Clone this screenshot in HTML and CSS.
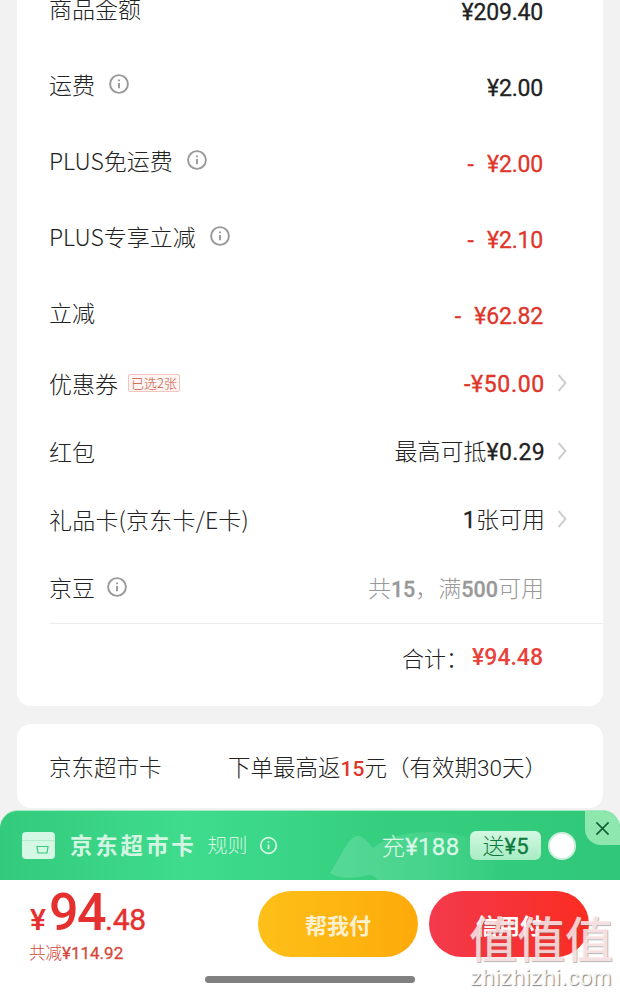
FILE: index.html
```html
<!DOCTYPE html>
<html lang="zh">
<head>
<meta charset="utf-8">
<title>订单结算</title>
<link rel="stylesheet" href="styles.css">
</head>
<body>
<main class="page">
  <section class="card summary">
    <div class="row tall"><span class="label">商品金额</span><span class="value">¥209.40</span></div>
    <div class="row tall"><span class="label">运费<svg class="info" viewBox="0 0 20 20"><circle cx="10" cy="10" r="8.9"/><path d="M10 9v5.2"/><path d="M10 5.6v1.6"/></svg></span><span class="value">¥2.00</span></div>
    <div class="row tall"><span class="label">PLUS免运费<svg class="info" viewBox="0 0 20 20"><circle cx="10" cy="10" r="8.9"/><path d="M10 9v5.2"/><path d="M10 5.6v1.6"/></svg></span><span class="value red">- ¥2.00</span></div>
    <div class="row tall"><span class="label">PLUS专享立减<svg class="info" viewBox="0 0 20 20"><circle cx="10" cy="10" r="8.9"/><path d="M10 9v5.2"/><path d="M10 5.6v1.6"/></svg></span><span class="value red">- ¥2.10</span></div>
    <div class="row tall"><span class="label">立减</span><span class="value red">- ¥62.82</span></div>
    <div class="row"><span class="label">优惠券<em class="tag">已选2张</em></span><span class="link"><span class="plain red"><span class="num">-¥50.00</span></span><svg class="chev" viewBox="0 0 10 20"><path d="M1.5 2l7 8-7 8"/></svg></span></div>
    <div class="row"><span class="label">红包</span><span class="link"><span class="plain">最高可抵<span class="num">¥0.29</span></span><svg class="chev" viewBox="0 0 10 20"><path d="M1.5 2l7 8-7 8"/></svg></span></div>
    <div class="row"><span class="label label-wide">礼品卡(京东卡/E卡)</span><span class="link"><span class="plain"><span class="num">1</span>张可用</span><svg class="chev" viewBox="0 0 10 20"><path d="M1.5 2l7 8-7 8"/></svg></span></div>
    <div class="row"><span class="label">京豆<svg class="info near" viewBox="0 0 20 20"><circle cx="10" cy="10" r="8.9"/><path d="M10 9v5.2"/><path d="M10 5.6v1.6"/></svg></span><span class="plain grey">共<span class="num">15</span>，满<span class="num">500</span>可用</span></div>
    <div class="total"><span class="total-label">合计：</span><span class="total-value">¥94.48</span></div>
  </section>
  <section class="card market">
    <span class="label market-name">京东超市卡</span>
    <span class="market-note">下单最高返<b>15</b>元（有效期<i>30</i>天）</span>
  </section>
</main>

<footer class="dock">
  <div class="banner">
    <svg class="fish" viewBox="0 0 180 60">
      <defs><linearGradient id="fishfade" x1="0" x2="1" y1="0" y2="0"><stop offset="0" stop-color="#57d997"/><stop offset=".6" stop-color="#46d38b"/><stop offset="1" stop-color="#36cd7f"/></linearGradient></defs>
      <path fill="url(#fishfade)" d="M0 52C10 38 18 15 28 15c6 0 10 7 15 12C60 14 80 11 100 11c25 0 48 6 60 18 8 10 6 24 0 31H48c-2-4-5-6-10-6-14 4-28 4-38-2z"/>
    </svg>
    <svg class="card-icon" viewBox="0 0 33 27"><rect width="33" height="27" rx="4" fill="#d4f8e3"/><path d="M0 8.5h33" stroke="#b1edcb" stroke-width="1"/><path d="M15 14.500h11l-1 6.500h-9z" fill="none" stroke="#35c97f" stroke-width="1.200"/></svg>
    <span class="banner-title">京东超市卡</span>
    <span class="banner-rule">规则</span>
    <svg class="rule-info" viewBox="0 0 20 20"><circle cx="10" cy="10" r="8.2"/><path d="M10 9v5"/><path d="M10 5.6v1.4"/></svg>
    <span class="banner-spacer"></span>
    <span class="banner-charge">充<span class="num">¥188</span></span>
    <span class="banner-gift">送<span class="num">¥5</span></span>
    <span class="banner-radio"></span>
    <span class="banner-close"><svg viewBox="0 0 16 16"><path d="M1.500 1.500l13 13M14.500 1.500l-13 13"/></svg></span>
  </div>
  <div class="paybar">
    <div class="price">
      <div class="price-main"><span class="yen">¥</span><span class="int">94</span><span class="dec">.48</span></div>
      <div class="saved">共减<span class="num">¥114.92</span></div>
    </div>
    <div class="buttons">
      <span class="btn yellow">帮我付</span>
      <span class="btn redbtn">信用付</span>
    </div>
  </div>
  <div class="home-bar"></div>
</footer>

<div class="watermark">
  <div class="wm-mark">值值值</div>
  <div class="wm-url">zhizhizhi.com</div>
</div>
</body>
</html>
```
FILE: styles.css
```css
* { box-sizing: border-box; }
html, body { margin: 0; height: 100%; }
body {
  width: 620px;
  height: 995px;
  overflow: hidden;
  position: relative;
  background: #f2f2f2;
  font-family: "Noto Sans CJK SC", "Noto Sans", sans-serif;
  color: #222;
}
.page { padding: 0 17px; }
.card { background: #fff; border-radius: 14px; }
.summary { margin-top: -30px; height: 736px; padding: 0 0 0 32px; }
.row {
  height: 68px;
  display: flex;
  align-items: center;
  justify-content: space-between;
  padding: 0 59px 2px 0;
}
.row.tall { height: 76px; padding-bottom: 0; padding-right: 60px; }
.label {
  display: flex;
  align-items: center;
  font-size: 23px;
  font-weight: 300;
  line-height: 30px;
  color: #222;
}
.label-wide { letter-spacing: .2px; }
.info {
  width: 20px;
  height: 20px;
  margin-left: 14px;
  fill: none;
  stroke: #999;
  stroke-width: 1.9;
}
.info.near { margin-left: 12px; }
.value {
  padding-top: 10px;
  font-family: "Roboto", sans-serif;
  font-size: 23px;
  font-weight: 400;
  letter-spacing: -.2px;
  word-spacing: 8px;
  -webkit-text-stroke: .3px currentColor;
  color: #222;
  line-height: 30px;
}
.value.red { color: #e0352a; }
.plain {
  padding-top: 1px;
  font-size: 23px;
  font-weight: 300;
  line-height: 30px;
}
.num {
  font-family: "Roboto", sans-serif;
  font-weight: 400;
  letter-spacing: .3px;
  -webkit-text-stroke: .3px currentColor;
}
.red { color: #e0352a; }
.plain.red .num { -webkit-text-stroke: .4px currentColor; letter-spacing: .7px; }
.grey { color: #999; padding-top: 2px; }
.grey .num { font-size: 21.5px; font-weight: 500; letter-spacing: 0; }
.link {
  display: flex;
  align-items: center;
  margin-right: -24px;
}
.chev {
  width: 10px;
  height: 20px;
  margin: 0 1px 0 12px;
  fill: none;
  stroke: #cdcdcd;
  stroke-width: 1.9;
}
.tag {
  margin-left: 10px;
  height: 18px;
  padding: 0 2px;
  border: 1px solid #f3c4bd;
  border-radius: 2px;
  background: #fff5f3;
  color: #c9543f;
  font-style: normal;
  font-size: 13px;
  line-height: 16px;
}
.total {
  margin-top: 1px;
  border-top: 1px solid #ececec;
  height: 67px;
  display: flex;
  align-items: center;
  justify-content: flex-end;
  padding-right: 60px;
}
.total-label { font-size: 22px; font-weight: 300; width: 70px; }
.total-value {
  font-family: "Roboto", sans-serif;
  font-size: 23px;
  font-weight: 500;
  color: #e8423a;
}
.market {
  margin-top: 18px;
  height: 84px;
  display: flex;
  align-items: center;
  padding: 0 32px;
}
.market-name { width: 179px; font-size: 22.500px; }
.market-note { font-size: 22.500px; font-weight: 300; white-space: nowrap; }
.market-note b { color: #e0352a; font-family: "Roboto", sans-serif; font-size: 21px; font-weight: 500; }
.market-note i { font-style: normal; font-family: "Roboto", sans-serif; font-weight: 300; }

.dock {
  position: absolute;
  left: 0;
  right: 0;
  top: 810px;
  height: 185px;
  background: linear-gradient(180deg, transparent 70px, #fff 70px);
}
.banner {
  position: relative;
  overflow: hidden;
  height: 70px;
  display: flex;
  align-items: center;
  padding: 0 44px 0 22px;
  border-radius: 18px 18px 0 0;
  border-top: 1px solid #a5eac3;
  background: linear-gradient(90deg, #33ca7c 0%, #3fdc8d 30%, #36cf80 60%, #30c878 100%);
}
.fish {
  position: absolute;
  left: 330px;
  top: 10px;
  width: 180px;
  height: 60px;
}
.card-icon { width: 33px; height: 27px; position: relative; }
.banner-title {
  position: relative;
  margin: 0 0 4px 15px;
  font-size: 22.500px;
  font-weight: 700;
  color: #d4f5e2;
  letter-spacing: 2.800px;
}
.banner-rule {
  position: relative;
  margin: 0 0 2px 11px;
  font-size: 20px;
  font-weight: 300;
  color: #d4f5e2;
}
.rule-info {
  position: relative;
  width: 19px;
  height: 19px;
  margin-left: 11px;
  fill: none;
  stroke: #d9f7e6;
  stroke-width: 1.8;
}
.banner-spacer { flex: 1; }
.banner-charge {
  position: relative;
  margin-bottom: 2px;
  font-size: 24px;
  font-weight: 300;
  color: #d9f7e6;
}
.banner-gift {
  position: relative;
  margin-left: 11px;
  height: 29px;
  padding: 0 12px;
  border-radius: 6px;
  background: linear-gradient(180deg, #d4f8e2, #a7ecc4);
  color: #0f7a40;
  font-size: 22px;
  font-weight: 300;
  line-height: 27px;
}
.banner-radio {
  position: relative;
  margin-left: 7px;
  width: 28px;
  height: 28px;
  border-radius: 50%;
  background: #fff;
  border: 2px solid #cdeedd;
}
.banner-close {
  position: absolute;
  right: 0;
  top: 0;
  width: 35px;
  height: 34px;
  display: flex;
  align-items: center;
  justify-content: center;
  border-radius: 0 16px 0 16px;
  background: #8ee8ae;
}
.banner-close svg {
  width: 15px;
  height: 15px;
  fill: none;
  stroke: #15603a;
  stroke-width: 1.8;
}
.paybar {
  height: 90px;
  display: flex;
  justify-content: space-between;
  padding: 0 31px 0 30px;
  background: #fff;
}
.price-main {
  display: flex;
  align-items: baseline;
  height: 60px;
  padding-top: 3px;
  color: #e5302f;
  font-family: "Roboto", sans-serif;
  font-weight: 500;
}
.yen { font-size: 30px; }
.int { font-size: 52px; line-height: 60px; margin-left: 3px; letter-spacing: -1.500px; }
.dec { font-size: 30px; letter-spacing: -.300px; font-weight: 400; -webkit-text-stroke: .4px currentColor; }
.saved {
  margin-left: -1px;
  color: #d5483a;
  font-size: 16.500px;
  font-weight: 300;
  line-height: 24px;
}
.saved .num { font-size: 17px; letter-spacing: 0; }
.buttons { display: flex; gap: 11px; padding-top: 11px; }
.btn {
  width: 160px;
  height: 66px;
  border-radius: 33px;
  display: flex;
  align-items: center;
  justify-content: center;
  color: #fff;
  font-size: 22px;
  font-weight: 700;
}
.yellow { background: linear-gradient(90deg, #fdc018, #fdaa0b); color: #fdf0cf; }
.redbtn { background: linear-gradient(90deg, #f33a4c, #fb2c22); }
.home-bar {
  width: 210px;
  height: 7px;
  border-radius: 4px;
  margin: 6px 0 0 205px;
  background: #808080;
}
.watermark {
  position: absolute;
  left: 462px;
  top: 908px;
  width: 158px;
  text-align: center;
  pointer-events: none;
}
.wm-mark {
  font-size: 48px;
  line-height: 56px;
  font-weight: 500;
  color: rgba(255, 232, 232, .85);
  text-shadow: 1px 1px 1px rgba(110, 110, 110, .5);
  white-space: nowrap;
}
.wm-url {
  font-family: "Liberation Sans", sans-serif;
  font-size: 22.500px;
  line-height: 27px;
  letter-spacing: .5px;
  color: rgba(255, 255, 255, .9);
  text-shadow: 1px 1px 1px rgba(80, 80, 80, .7);
  white-space: nowrap;
}
```
